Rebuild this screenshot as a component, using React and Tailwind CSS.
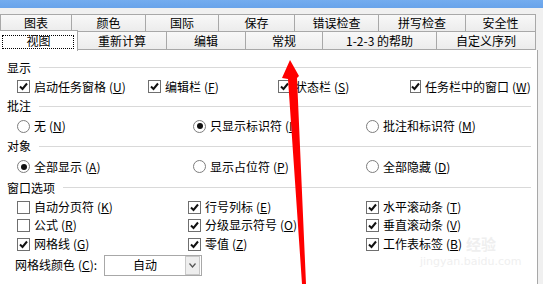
import React from "react";

const font = "font-['Noto_Sans_CJK_SC','DejaVu_Sans',sans-serif]";

function Key({ k }) {
  return (
    <span className="ml-[3px]">
      (<u>{k}</u>)
    </span>
  );
}

function Check({ on, label, k, w }) {
  return (
    <div className="flex items-center shrink-0" style={{ width: w }}>
      <div className="w-[13px] h-[13px] border border-[#6f6f6f] bg-white flex items-center justify-center">
        {on && (
          <svg width="9" height="9" viewBox="0 0 9 9">
            <path d="M1 4.5 L3.5 7 L8 1.5" fill="none" stroke="#111" strokeWidth="2" />
          </svg>
        )}
      </div>
      <span className="ml-[4px] whitespace-nowrap">
        {label}
        <Key k={k} />
      </span>
    </div>
  );
}

function Radio({ on, label, k, w }) {
  return (
    <div className="flex items-center shrink-0" style={{ width: w }}>
      <div className="w-[13px] h-[13px] rounded-full border border-[#7d7d7d] bg-white flex items-center justify-center">
        {on && <div className="w-[6px] h-[6px] rounded-full bg-[#111]" />}
      </div>
      <span className="ml-[4px] whitespace-nowrap">
        {label}
        <Key k={k} />
      </span>
    </div>
  );
}

function Heading({ text, h }) {
  return (
    <div className="flex items-center pl-[7px] pr-[6px]" style={{ height: h }}>
      <span className="whitespace-nowrap">{text}</span>
      <div className="flex-1 h-px bg-[#d9d9d9] ml-[8px]" />
    </div>
  );
}

function Tab({ w, children, first }) {
  return (
    <div
      className={
        "h-full flex items-center justify-center bg-gradient-to-b from-[#f8f8f8] to-[#ececec] border-t border-r border-[#a8a8a8] " +
        (first ? "border-l" : "")
      }
      style={{ width: w }}
    >
      {children}
    </div>
  );
}

export default function App() {
  return (
    <div className={"relative w-[543px] h-[284px] overflow-hidden bg-[#f0f0f0] text-[12px] text-black " + font}>
      <div className="h-[8px] bg-gradient-to-b from-[#73acef] to-[#68a3ea]" />
      <div className="h-[6px]" />

      {/* tab row 1 */}
      <div className="flex h-[17px]">
        <Tab w={72} first>图表</Tab>
        <Tab w={74}>颜色</Tab>
        <Tab w={73}>国际</Tab>
        <Tab w={76}>保存</Tab>
        <Tab w={84}>错误检查</Tab>
        <Tab w={87}>拼写检查</Tab>
        <Tab w={70}>安全性</Tab>
      </div>

      {/* tab row 2 */}
      <div className="flex h-[19px] relative">
        <div className="w-[78px] h-[21px] -mt-[1px] bg-white border-t border-r border-[#a8a8a8] relative z-10 flex items-center justify-center">
          <div className="absolute left-[2px] top-[4px] w-[72px] h-[14px] border border-dotted border-black" />
          视图
        </div>
        <div className="flex h-full border-b border-[#a8a8a8]">
          <Tab w={89}>重新计算</Tab>
          <Tab w={79}>编辑</Tab>
          <Tab w={77}>常规</Tab>
          <Tab w={114}>1-2-3 的帮助</Tab>
          <Tab w={99}>自定义序列</Tab>
        </div>
      </div>

      {/* panel */}
      <div className="w-[538px] h-[234px] bg-white border-r border-[#a8a8a8] pt-[8px] relative">
        <Heading text="显示" h={19} />
        <div className="flex items-center h-[19px] pl-[17px]">
          <Check on label="启动任务窗格" k="U" w={131} />
          <Check on label="编辑栏" k="F" w={130} />
          <Check on label="状态栏" k="S" w={132} />
          <Check on label="任务栏中的窗口" k="W" w={120} />
        </div>
        <Heading text="批注" h={20} />
        <div className="flex items-center h-[20px] pl-[17px]">
          <Radio label="无" k="N" w={176} />
          <Radio on label="只显示标识符" k="I" w={173} />
          <Radio label="批注和标识符" k="M" w={150} />
        </div>
        <Heading text="对象" h={20} />
        <div className="flex items-center h-[21px] pl-[17px]">
          <Radio on label="全部显示" k="A" w={176} />
          <Radio label="显示占位符" k="P" w={173} />
          <Radio label="全部隐藏" k="D" w={150} />
        </div>
        <Heading text="窗口选项" h={21} />
        <div className="flex items-center h-[18px] pl-[17px]">
          <Check label="自动分页符" k="K" w={171} />
          <Check on label="行号列标" k="E" w={178} />
          <Check on label="水平滚动条" k="T" w={150} />
        </div>
        <div className="flex items-center h-[18px] pl-[17px]">
          <Check label="公式" k="R" w={171} />
          <Check on label="分级显示符号" k="O" w={178} />
          <Check on label="垂直滚动条" k="V" w={150} />
        </div>
        <div className="flex items-center h-[20px] pl-[17px]">
          <Check on label="网格线" k="G" w={171} />
          <Check on label="零值" k="Z" w={178} />
          <Check on label="工作表标签" k="B" w={150} />
        </div>
        <div className="flex items-center h-[22px] pl-[15px]">
          <span className="w-[89px] whitespace-nowrap">
            网格线颜色<Key k="C" />:
          </span>
          <div className="w-[98px] h-[21px] border border-[#a8a8a8] bg-white flex items-center">
            <span className="flex-1 text-center">自动</span>
            <div className="w-[15px] h-[19px] mr-[1px] bg-[#eeeeee] border border-[#c8c8c8] flex items-center justify-center">
              <svg width="7" height="5" viewBox="0 0 7 5">
                <path d="M0.5 0.5 L3.5 4 L6.5 0.5" fill="none" stroke="#555" strokeWidth="1.2" />
              </svg>
            </div>
          </div>
        </div>

        {/* watermark */}
        <div className="absolute left-[466px] top-[186px] text-[#efefef] text-[15px] font-bold leading-none pointer-events-none">
          经验
        </div>
        <div className="absolute left-[420px] top-[206px] text-[#efefef] text-[11px] leading-none pointer-events-none font-['DejaVu_Sans',sans-serif]">
          jingyan.baidu.com
        </div>
      </div>

      {/* red arrow */}
      <svg className="absolute left-0 top-0 pointer-events-none" width="543" height="284" viewBox="0 0 543 284">
        <polygon points="290,60 299,76 297,78 306,284 302,284 288,79 282,78" fill="#ff0000" />
      </svg>
    </div>
  );
}
